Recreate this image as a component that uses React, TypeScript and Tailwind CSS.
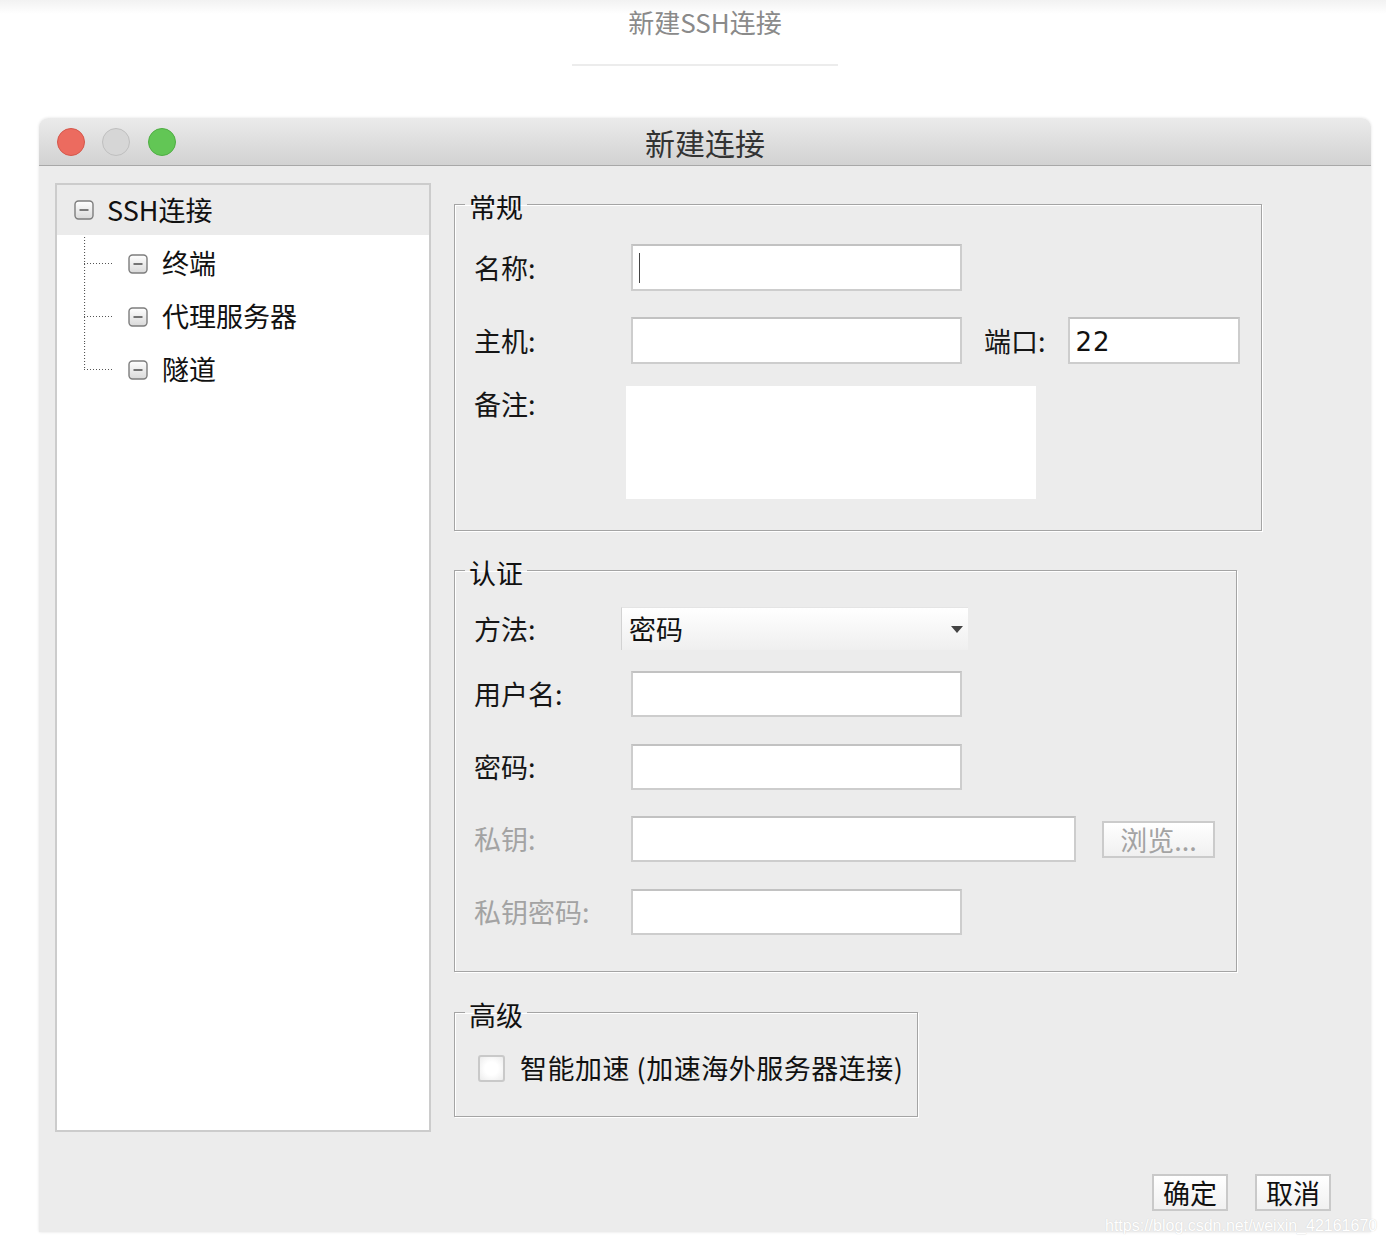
import React from "react";

const font = "font-['Noto_Sans_CJK_SC','Noto_Sans',sans-serif]";

const MinusBox = () => (
  <svg width="20" height="20" viewBox="0 0 20 20" className="shrink-0">
    <defs>
      <linearGradient id="mb" x1="0" y1="0" x2="0" y2="1">
        <stop offset="0" stopColor="#ffffff" />
        <stop offset="1" stopColor="#d9d9d9" />
      </linearGradient>
    </defs>
    <rect x="1" y="1" width="18" height="18" rx="3.5" fill="url(#mb)" stroke="#7d7d7d" strokeWidth="1.4" />
    <line x1="5.5" y1="10" x2="14.5" y2="10" stroke="#555" strokeWidth="1.6" />
  </svg>
);

const Connector = ({ last }: { last?: boolean }) => (
  <svg width="30" height="53" viewBox="0 0 30 53" className="shrink-0">
    <line x1="0.5" y1="0" x2="0.5" y2={last ? 26.5 : 53} stroke="#555" strokeWidth="1.2" strokeDasharray="1 2" />
    <line x1="0" y1="26.5" x2="30" y2="26.5" stroke="#555" strokeWidth="1.2" strokeDasharray="1 2" />
  </svg>
);

const Field = ({ w, h = "h-[46px]", caret, children }: { w: string; h?: string; caret?: boolean; children?: React.ReactNode }) => (
  <div className={`${w} ${h} bg-white border-2 border-[#cdcdcd] border-t-[#c2c2c2] flex items-center pl-[6px] text-[27px] text-[#111]`}>
    {caret && <span className="block w-px h-[30px] bg-[#444]" />}
    {children}
  </div>
);

const Group = ({ title, w, children }: { title: string; w: string; children: React.ReactNode }) => (
  <fieldset className={`${w} border border-[#a4a4a4] shadow-[inset_1px_1px_0_#fff,1px_1px_0_#fff] px-0`}>
    <legend className="relative top-[3px] ml-[10px] px-[4px] text-[27px] leading-[30px] text-[#111]">{title}</legend>
    {children}
  </fieldset>
);

const Label = ({ w, muted, children }: { w: string; muted?: boolean; children: React.ReactNode }) => (
  <div className={`${w} shrink-0 text-[27px] leading-[30px] ${muted ? "text-[#a3a3a3]" : "text-[#161616]"}`}>{children}</div>
);

const Btn = ({ children, w }: { children: React.ReactNode; w: string }) => (
  <div className={`${w} h-[37px] flex items-center justify-center border-2 border-[#c9c9c9] bg-gradient-to-b from-white to-[#f1f1f1] text-[27px] leading-none text-[#111]`}>
    {children}
  </div>
);

export default function App() {
  const children = ["终端", "代理服务器", "隧道"];

  return (
    <div className={`${font} relative min-h-[1246px] bg-white`}>
      <div className="h-[118px] bg-[linear-gradient(to_bottom,#f2f2f2_0px,#ffffff_14px)]">
        <div className="ml-[39px] w-[1332px] flex flex-col items-center pt-[5px]">
          <div className="text-[26px] leading-[33px] text-[#8a8a8a]">新建SSH连接</div>
          <div className="mt-[26px] w-[266px] h-[2px] bg-[#ececec]" />
        </div>
      </div>

      <div className="ml-[39px] w-[1332px] rounded-t-[9px] overflow-hidden shadow-[0_0_3px_rgba(0,0,0,0.12)]">
        <div className="h-[48px] grid grid-cols-[1fr_auto_1fr] items-center bg-gradient-to-b from-[#ebebeb] to-[#d2d2d2] border-b border-[#a8a8a8]">
          <div className="flex items-center pl-[18px]">
            <span className="w-[28px] h-[28px] rounded-full bg-[#ec6b5f] border border-[#d5574b]" />
            <span className="ml-[17px] w-[28px] h-[28px] rounded-full bg-[#d6d6d6] border border-[#bfbfbf]" />
            <span className="ml-[18px] w-[28px] h-[28px] rounded-full bg-[#62c655] border border-[#4fae43]" />
          </div>
          <div className="text-[30px] leading-none text-[#333]">新建连接</div>
          <div />
        </div>

        <div className="bg-[#ececec] pt-[17px] pb-[21px] h-[1066px] flex flex-col">
          <div className="flex items-start">
            {/* tree */}
            <div className="ml-[16px] w-[376px] h-[949px] bg-white border-2 border-[#cccccc]">
              <div className="h-[50px] bg-[#ebebeb] flex items-center pl-[17px]">
                <MinusBox />
                <span className="ml-[13px] text-[27px] text-[#111]">SSH连接</span>
              </div>
              <div className="pt-[2px]">
                {children.map((c, i) => (
                  <div key={c} className="h-[53px] flex items-center pl-[27px]">
                    <Connector last={i === children.length - 1} />
                    <span className="ml-[14px]">
                      <MinusBox />
                    </span>
                    <span className="ml-[14px] text-[27px] text-[#111]">{c}</span>
                  </div>
                ))}
              </div>
            </div>

            {/* form */}
            <div className="ml-[23px] pt-[6px] flex flex-col">
              <Group title="常规" w="w-[808px]">
                <div className="pl-[19px] pb-[31px]">
                  <div className="mt-[25px] flex items-center">
                    <Label w="w-[157px]">名称:</Label>
                    <Field w="w-[331px]" h="h-[47px]" caret />
                  </div>
                  <div className="mt-[26px] flex items-center">
                    <Label w="w-[157px]">主机:</Label>
                    <Field w="w-[331px]" h="h-[47px]" />
                    <div className="ml-[22px] text-[27px] leading-[30px] text-[#161616]">端口:</div>
                    <Field w="ml-[22px] w-[172px]" h="h-[47px]">
                      <span className="translate-y-[2px] font-['DejaVu_Sans',sans-serif] text-[26px] tracking-[1px]">22</span>
                    </Field>
                  </div>
                  <div className="mt-[22px] flex items-start">
                    <div className="pt-[3px]">
                      <Label w="w-[152px]">备注:</Label>
                    </div>
                    <div className="w-[410px] h-[113px] bg-white" />
                  </div>
                </div>
              </Group>

              <div className="mt-[24px]">
                <Group title="认证" w="w-[783px]">
                  <div className="pl-[19px] pb-[36px]">
                    <div className="mt-[22px] flex items-center">
                      <Label w="w-[147px]">方法:</Label>
                      <div className="w-[347px] h-[43px] flex items-center justify-between pl-[7px] pr-[4px] bg-gradient-to-b from-white to-[#efefef] border-l border-[#d2d2d2] border-t border-t-[#e4e4e4]">
                        <span className="text-[27px] text-[#111]">密码</span>
                        <svg width="14" height="9" viewBox="0 0 14 9">
                          <path d="M1 1h12L7 8z" fill="#444" />
                        </svg>
                      </div>
                    </div>
                    <div className="mt-[21px] flex items-center">
                      <Label w="w-[157px]">用户名:</Label>
                      <Field w="w-[331px]" />
                    </div>
                    <div className="mt-[27px] flex items-center">
                      <Label w="w-[157px]">密码:</Label>
                      <Field w="w-[331px]" />
                    </div>
                    <div className="mt-[26px] flex items-center">
                      <Label w="w-[157px]" muted>私钥:</Label>
                      <Field w="w-[445px]" />
                      <div className="ml-[26px] w-[113px] h-[37px] flex items-center justify-center border-2 border-[#cbcbcb] bg-gradient-to-b from-white to-[#f0f0f0] text-[27px] leading-none text-[#a3a3a3]">
                        浏览...
                      </div>
                    </div>
                    <div className="mt-[27px] flex items-center">
                      <Label w="w-[157px]" muted>私钥密码:</Label>
                      <Field w="w-[331px]" />
                    </div>
                  </div>
                </Group>
              </div>

              <div className="mt-[25px]">
                <Group title="高级" w="w-[464px]">
                  <div className="pl-[23px] pb-[33px]">
                    <div className="mt-[26px] flex items-center">
                      <span className="w-[27px] h-[27px] rounded-[3px] border-2 border-[#c9c9c9] bg-[radial-gradient(circle,#ffffff_40%,#ececec_100%)]" />
                      <span className="ml-[15px] text-[27px] leading-[30px] tracking-[0.5px] text-[#111]">智能加速 (加速海外服务器连接)</span>
                    </div>
                  </div>
                </Group>
              </div>
            </div>
          </div>

          <div className="mt-auto flex justify-end gap-[27px] pr-[40px]">
            <Btn w="w-[76px]">确定</Btn>
            <Btn w="w-[76px]">取消</Btn>
          </div>
        </div>
      </div>

      <div className="absolute left-[1105px] top-[1214px] font-['Liberation_Sans',sans-serif] text-[16px] text-white [text-shadow:0_0_1px_#c8c8c8]">
        https://blog.csdn.net/weixin_42161670
      </div>
    </div>
  );
}
